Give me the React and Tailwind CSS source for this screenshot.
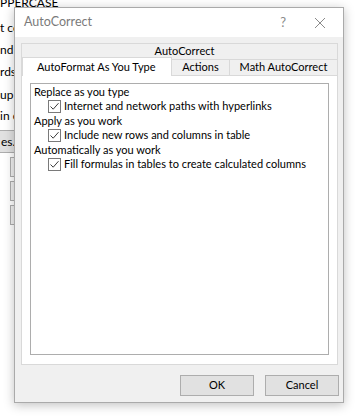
import React from 'react';

const font = "font-['Lato','Noto_Sans',sans-serif]";

function Check({ label }) {
  return (
    <div className="flex h-[15px] items-center pl-[17px]">
      <span className="flex h-[13px] w-[13px] shrink-0 items-center justify-center border border-[#7a7a7a] bg-white">
        <svg width="11" height="11" viewBox="0 0 11 11">
          <path d="M1.5 5.5 L4.2 8.2 L9.5 2.2" fill="none" stroke="#3c3c3c" strokeWidth="1" />
        </svg>
      </span>
      <span className="ml-[3px] whitespace-nowrap">{label}</span>
    </div>
  );
}

function Heading({ children }) {
  return <div className="flex h-[14px] items-center pl-[3px] whitespace-nowrap">{children}</div>;
}

export default function App() {
  const behind = [
    { t: 'PPERCASE', y: -3 },
    { t: 't cor', y: 22 },
    { t: 'nd f', y: 44, u: true },
    { t: 'rds', y: 66 },
    { t: 'up', y: 89 },
    { t: 'in c', y: 110 },
  ];

  return (
    <div className={`relative h-[417px] w-[359px] overflow-hidden bg-white text-[11px] text-black ${font}`}>
      {/* window behind the dialog */}
      {behind.map((l) => (
        <div key={l.t} className="absolute left-0 whitespace-nowrap text-[12px] leading-[12px]" style={{ top: l.y }}>
          {l.u ? (
            <>
              nd <span className="underline">f</span>
            </>
          ) : (
            l.t
          )}
        </div>
      ))}
      <div className="absolute left-[-4px] top-[130px] flex h-[23px] w-[30px] items-center justify-end border border-[#adadad] bg-[#e1e1e1] pr-1 text-[12px]">
        es...
      </div>
      <div className="absolute left-[10px] top-[157px] h-[20px] w-[8px] border border-[#adadad] bg-[#f0f0f0]" />
      <div className="absolute left-[10px] top-[181px] h-[20px] w-[8px] border border-[#adadad] bg-[#f0f0f0]" />
      <div className="absolute left-[10px] top-[205px] h-[20px] w-[8px] border border-[#adadad] bg-[#f0f0f0]" />

      {/* dialog */}
      <div className="absolute left-[14px] top-[7px] flex h-[396px] w-[330px] flex-col border border-[#aaaaaa] bg-[#f0f0f0] shadow-[0_2px_10px_rgba(0,0,0,0.25)]">
        <div className="flex h-[29px] items-center bg-white pl-[9px] text-[12.5px] text-[#7a7a7a]">
          <span>AutoCorrect</span>
          <span className="ml-auto mr-[28px] text-[13px] text-[#8a8a8a]">?</span>
          <svg className="mr-[17px]" width="12" height="12" viewBox="0 0 12 12">
            <path d="M1 1 L11 11 M11 1 L1 11" stroke="#8a8a8a" strokeWidth="1" />
          </svg>
        </div>

        <div className="ml-[6px] mr-[5px] mt-[6px] flex flex-col">
          <div className="flex h-[16px] items-center justify-center border border-b-0 border-[#d9d9d9] bg-[#f0f0f0]">
            <span className="pl-[10px]">AutoCorrect</span>
          </div>
          <div className="flex h-[16px] border-l border-[#d9d9d9]">
            <div className="relative z-10 -mt-[2px] flex h-[19px] w-[150px] items-center border-x border-t border-[#d9d9d9] bg-white pl-[14px]">
              AutoFormat As You Type
            </div>
            <div className="flex w-[58px] items-center justify-center border-r border-t border-[#d9d9d9]">Actions</div>
            <div className="flex flex-1 items-center justify-center border-r border-t border-[#d9d9d9]">Math AutoCorrect</div>
          </div>
          <div className="h-[290px] border border-[#d9d9d9] bg-white px-[8px] pt-[7px] pb-[9px]">
            <div className="flex h-full flex-col border border-[#adadad] pt-[1px]">
              <Heading>Replace as you type</Heading>
              <Check label="Internet and network paths with hyperlinks" />
              <Heading>Apply as you work</Heading>
              <Check label="Include new rows and columns in table" />
              <Heading>Automatically as you work</Heading>
              <Check label="Fill formulas in tables to create calculated columns" />
            </div>
          </div>
        </div>

        <div className="mr-[4px] mt-[10px] flex justify-end gap-[11px]">
          <button className="h-[21px] w-[74px] border border-[#adadad] bg-[#e1e1e1] text-[11px]">OK</button>
          <button className="h-[21px] w-[74px] border border-[#adadad] bg-[#e1e1e1] text-[11px]">Cancel</button>
        </div>
      </div>
    </div>
  );
}
